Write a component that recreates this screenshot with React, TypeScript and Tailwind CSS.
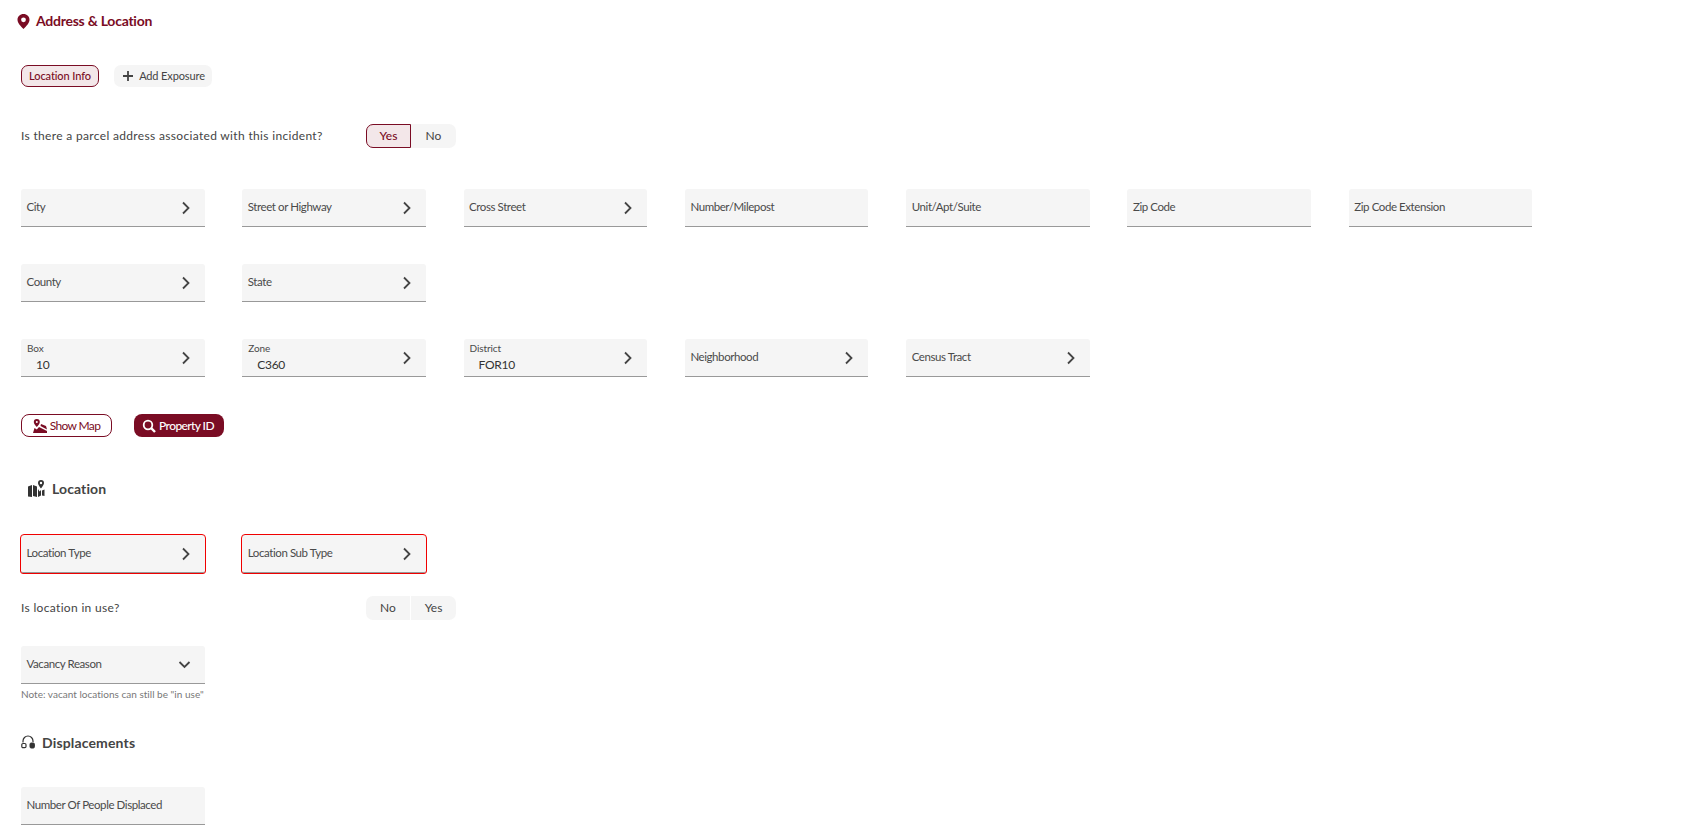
import React from "react";

const Chevron = () => (
  <svg width="10" height="14" viewBox="0 0 10 14" className="absolute right-[14px] top-[12px]" fill="none">
    <path d="M2 1.5 L7.5 7 L2 12.5" stroke="#444" strokeWidth="1.8" />
  </svg>
);
const Down = () => (
  <svg width="14" height="10" viewBox="0 0 14 10" className="absolute right-[13px] top-[14px]" fill="none">
    <path d="M1.5 2 L6.5 7 L11.5 2" stroke="#444" strokeWidth="1.8" />
  </svg>
);

function Field({ label, value, kind = "right", error }: { label: string; value?: string; kind?: "right" | "down" | "none"; error?: boolean }) {
  return (
    <div
      className={`relative h-[38px] w-[183.5px] shrink-0 rounded-t-[3px] bg-[#f5f5f5] border-b border-b-[#999] ${
        error ? "outline outline-[#f00000] rounded-[2px]" : ""
      }`}
    >
      {value ? (
        <>
          <div className="absolute left-[6px] top-[2px] text-[10px] leading-[14px] tracking-[-0.1px] text-[#4a4a4a]">{label}</div>
          <div className="absolute left-[15px] top-[18px] text-[12px] leading-[16px] tracking-[-0.3px] text-[#333]">{value}</div>
        </>
      ) : (
        <div className="pl-[5.5px] pt-[9px] text-[11.5px] leading-[18px] tracking-[-0.42px] text-[#4a4a4a]">{label}</div>
      )}
      {kind === "right" && <Chevron />}
      {kind === "down" && <Down />}
    </div>
  );
}

function Row({ children, className = "" }: { children: React.ReactNode; className?: string }) {
  return <div className={`flex gap-[37.8px] ${className}`}>{children}</div>;
}

function Toggle({ a, b, active }: { a: string; b: string; active?: boolean }) {
  return (
    <div className="flex h-[24px] w-[90px] rounded-[7px] bg-[#f5f5f5] text-[12px] text-[#444]">
      <div
        className={`flex w-[45px] items-center justify-center ${
          active
            ? "rounded-l-[7px] border border-[#7a0c24] bg-[#f3e7e9] font-medium text-[#7a0c24]"
            : "border-r border-r-white"
        }`}
      >
        {a}
      </div>
      <div className="flex flex-1 items-center justify-center">{b}</div>
    </div>
  );
}

export default function App() {
  return (
    <div className="h-[839px] overflow-hidden bg-white pl-[21px] font-['Lato','Liberation_Sans',sans-serif] text-[#444]">
      <div className="-ml-[4px] mt-[10px] flex h-[20px] items-center gap-[6px] text-[14px] font-bold tracking-[-0.25px] text-[#7a0c24]">
        <svg width="13" height="17" viewBox="0 0 13 16" className="mt-[2px]">
          <path fillRule="evenodd" fill="#7a0c24" d="M6.5 0.5C3 0.5 0.5 3 0.5 6.3 0.5 9.8 4 13 6.5 15.5 9 13 12.5 9.8 12.5 6.3 12.5 3 10 0.5 6.5 0.5ZM6.5 3.9A2.4 2.4 0 1 1 6.5 8.7 2.4 2.4 0 1 1 6.5 3.9Z" />
        </svg>
        <span>Address &amp; Location</span>
      </div>

      <div className="mt-[35px] flex items-center gap-[15px]">
        <div className="flex h-[22px] w-[78px] items-center justify-center rounded-[7px] border border-[#7a0c24] bg-[#f3e7e9] text-[11px] font-medium tracking-[-0.1px] text-[#7a0c24]">
          Location Info
        </div>
        <div className="flex h-[22px] w-[98px] items-center justify-center gap-[5px] rounded-[7px] bg-[#f5f5f5] pl-[1px] text-[11px] tracking-[-0.12px] text-[#444]">
          <svg width="12" height="12" viewBox="0 0 12 12"><path d="M6 1v10M1 6h10" stroke="#444" strokeWidth="1.8" /></svg>
          Add Exposure
        </div>
      </div>

      <div className="mt-[36px] flex h-[25px] w-[435px] items-center justify-between">
        <span className="text-[12px] tracking-[0.33px] text-[#444]">Is there a parcel address associated with this incident?</span>
        <Toggle a="Yes" b="No" active />
      </div>

      <Row className="mt-[41px]">
        <Field label="City" />
        <Field label="Street or Highway" />
        <Field label="Cross Street" />
        <Field label="Number/Milepost" kind="none" />
        <Field label="Unit/Apt/Suite" kind="none" />
        <Field label="Zip Code" kind="none" />
        <Field label="Zip Code Extension" kind="none" />
      </Row>
      <Row className="mt-[37px]">
        <Field label="County" />
        <Field label="State" />
      </Row>
      <Row className="mt-[37px]">
        <Field label="Box" value="10" />
        <Field label="Zone" value="C360" />
        <Field label="District" value="FOR10" />
        <Field label="Neighborhood" />
        <Field label="Census Tract" />
      </Row>

      <div className="mt-[37px] flex gap-[22px]">
        <div className="flex h-[23px] w-[91px] items-center justify-center gap-[3px] rounded-[8px] border border-[#7a0c24] text-[12px] tracking-[-0.65px] text-[#7a0c24]">
          <svg width="14" height="14" viewBox="0 0 14 14" fill="#7a0c24">
            <path fillRule="evenodd" d="M3.8 0A3 3 0 0 0 .8 3c0 2 3 5 3 5s3-3 3-5a3 3 0 0 0-3-3Zm0 2a1 1 0 1 1 0 2 1 1 0 0 1 0-2Z" />
            <path d="M0 14l1.5-5 2.3 1.5L6 8l8 4 0 2Z" />
            <path d="M8 5l5 2 1 3.5L7.5 7Z" />
          </svg>
          Show Map
        </div>
        <div className="flex h-[23px] w-[90px] items-center justify-center gap-[3px] rounded-[8px] bg-[#7a0c24] pr-[2px] text-[12px] font-medium tracking-[-0.6px] text-white">
          <svg width="14" height="14" viewBox="0 0 14 14" fill="none" stroke="white">
            <circle cx="6" cy="6" r="4.3" strokeWidth="1.8" />
            <path d="M9.2 9.2L13 13" strokeWidth="2.4" />
          </svg>
          Property ID
        </div>
      </div>

      <div className="ml-[7px] mt-[39px] flex h-[24px] items-center gap-[7px] text-[14px] font-bold tracking-[0.1px] text-[#444]">
        <svg width="17" height="17" viewBox="0 0 17 17" fill="#333">
          <path d="M0 6.5 4 5v12L0 16.5Z" />
          <path d="M5 5l4 1.5V17l-4-1Z" />
          <path d="M10 9l1.5 2.5L13 10v5.5L10 17Z" />
          <path d="M14 10.5l2.5-1V16L14 15.5Z" />
          <path fillRule="evenodd" d="M13 0a3 3 0 0 0-3 3c0 2 3 5.5 3 5.5S16 5 16 3a3 3 0 0 0-3-3Zm0 1.8a1.2 1.2 0 1 1 0 2.4 1.2 1.2 0 0 1 0-2.4Z" />
        </svg>
        <span>Location</span>
      </div>

      <Row className="mt-[35px]">
        <Field label="Location Type" error />
        <Field label="Location Sub Type" error />
      </Row>

      <div className="mt-[23px] flex h-[24px] w-[435px] items-center justify-between">
        <span className="text-[12px] tracking-[0.33px] text-[#444]">Is location in use?</span>
        <Toggle a="No" b="Yes" />
      </div>

      <div className="mt-[26px]">
        <Field label="Vacancy Reason" kind="down" />
      </div>
      <div className="mt-[3px] h-[14px] text-[10px] leading-[14px] tracking-[0.02px] text-[#777]">Note: vacant locations can still be "in use"</div>

      <div className="mt-[29px] flex h-[24px] items-center gap-[7px] text-[14px] font-bold tracking-[0.15px] text-[#444]">
        <svg width="14" height="14" viewBox="0 0 14 14" fill="none" stroke="#333">
          <path d="M2 7.5V6a5 5 0 0 1 10 0v1" strokeWidth="1.2" />
          <rect x="0.8" y="8.5" width="4.2" height="4.2" rx="1.2" strokeWidth="1.2" />
          <rect x="9" y="8" width="4.4" height="5" rx="1.2" fill="#333" />
        </svg>
        <span>Displacements</span>
      </div>

      <div className="mt-[33px]">
        <Field label="Number Of People Displaced" kind="none" />
      </div>
    </div>
  );
}
